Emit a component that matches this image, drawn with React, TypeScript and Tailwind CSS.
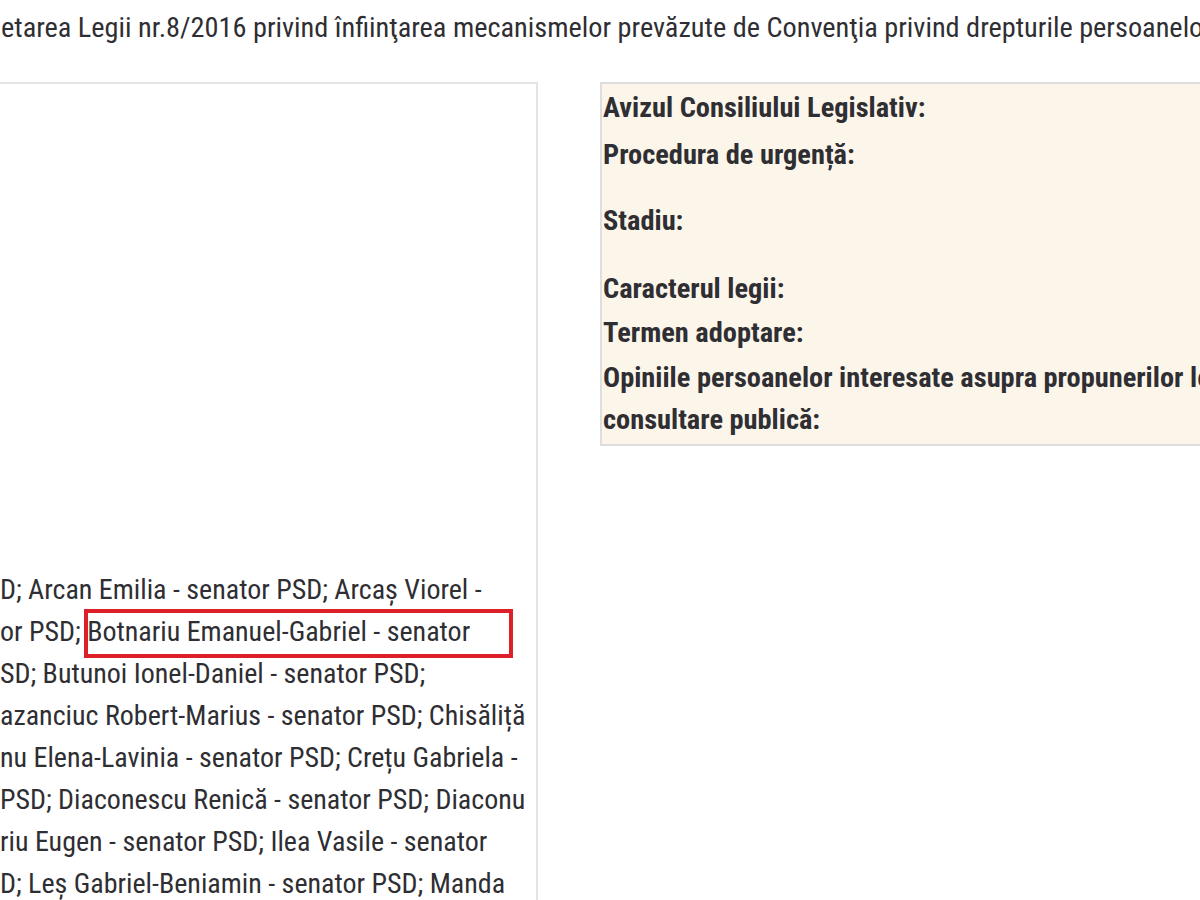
import React from "react";

const font = { fontFamily: "'Roboto Condensed', 'Liberation Sans Narrow', Roboto, sans-serif" };

const senatori = [
  "D; Arcan Emilia - senator PSD; Arcaș Viorel -",
  "or PSD; Botnariu Emanuel-Gabriel - senator",
  "SD; Butunoi Ionel-Daniel - senator PSD;",
  "azanciuc Robert-Marius - senator PSD; Chisăliță",
  "nu Elena-Lavinia - senator PSD; Crețu Gabriela -",
  "PSD; Diaconescu Renică - senator PSD; Diaconu",
  "riu Eugen - senator PSD; Ilea Vasile - senator",
  "D; Leș Gabriel-Beniamin - senator PSD; Manda",
];

export default function App() {
  return (
    <div className="w-[1200px] h-[900px] overflow-hidden bg-white text-[#2e2e33]" style={font}>
      <div className="h-[82px] pt-[7px] pl-[1px] text-[28.3px] leading-[42px] whitespace-nowrap overflow-hidden">
        etarea Legii nr.8/2016 privind înfiinţarea mecanismelor prevăzute de Convenţia privind drepturile persoanelor cu dizabilităţi
      </div>

      <div className="flex items-start">
        {/* coloana stanga */}
        <div className="relative w-[538px] h-[818px] border-t-2 border-r-2 border-[#e4e4e4] shrink-0 overflow-hidden">
          <div className="pt-[485px] text-[28px] leading-[42px] whitespace-nowrap">
            {senatori.map((s) => (
              <div key={s}>{s}</div>
            ))}
          </div>
          <div className="absolute left-[84px] top-[525px] w-[429px] h-[49px] border-[4px] border-[#dd1f29]" />
        </div>

        <div className="w-[62px] shrink-0" />

        {/* detalii */}
        <div className="w-[600px] shrink-0 h-[364px] bg-[#fcf5e9] border-2 border-r-0 border-[#dedede] pl-[1px] pt-[2px] font-bold text-[28.4px] leading-[44px] whitespace-nowrap overflow-hidden">
          <div>Avizul Consiliului Legislativ:</div>
          <div className="mt-[3px]">Procedura de urgență:</div>
          <div className="mt-[22px]">Stadiu:</div>
          <div className="mt-[24px]">Caracterul legii:</div>
          <div>Termen adoptare:</div>
          <div className="mt-[2px] leading-[42px]">
            Opiniile persoanelor interesate asupra propunerilor legislative aflate în
            <br />
            consultare publică:
          </div>
        </div>
      </div>
    </div>
  );
}
